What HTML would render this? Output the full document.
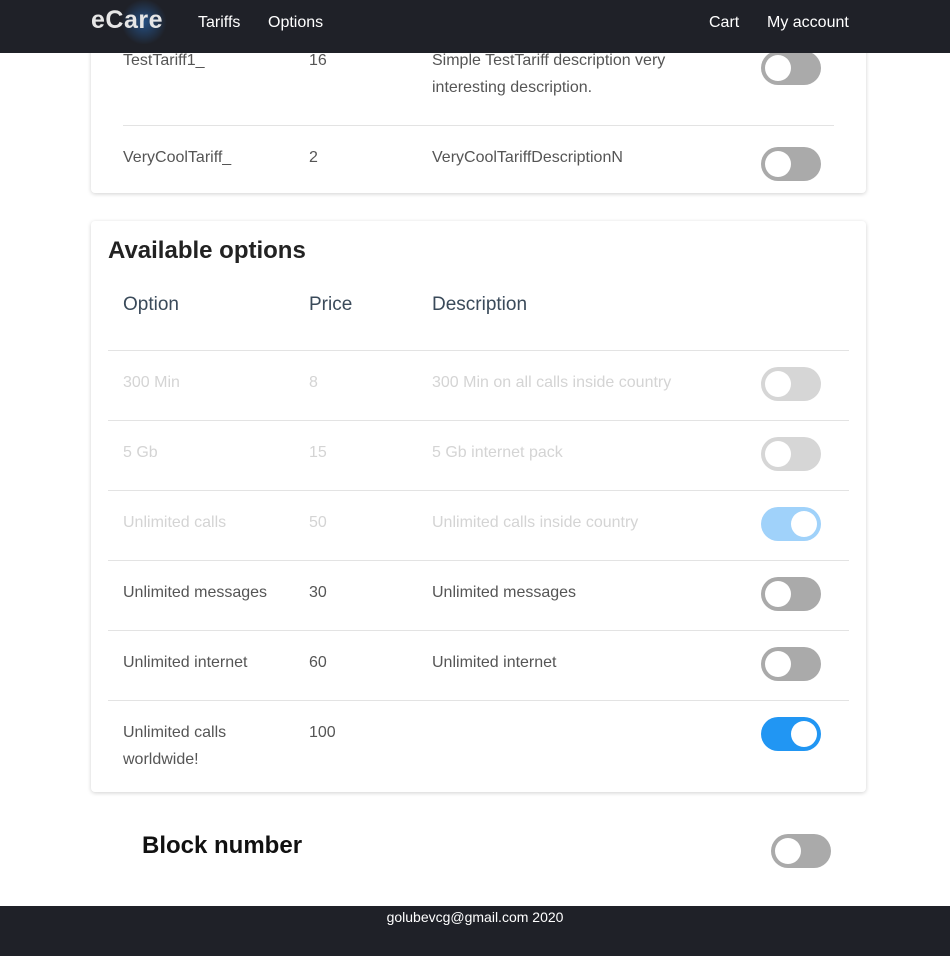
<!DOCTYPE html>
<html><head><style>
*{margin:0;padding:0;box-sizing:border-box}
body{width:950px;height:956px;background:#fff;font-family:"Liberation Sans",sans-serif;position:relative;overflow:hidden;color:#555}
.nav{position:absolute;left:0;top:0;width:950px;height:53px;background:#1f2128;z-index:5}
.nav span{position:absolute;color:#fff;font-size:16px;top:14px}
.logo{position:absolute;left:91px;top:6px;font-size:25px;font-weight:bold;color:#e6e6e6;letter-spacing:0.5px}
.glow{position:absolute;left:120px;top:0;width:48px;height:44px;background:radial-gradient(circle,rgba(40,100,170,.7),rgba(40,100,170,0) 70%)}
.card{position:absolute;left:91px;width:775px;background:#fff;border-radius:4px;box-shadow:0 1px 4px rgba(0,0,0,.18)}
.t{position:absolute;font-size:16px;line-height:27px;color:#555}
.light{color:#d4d4d4}
.h{position:absolute;font-size:19px;color:#3a4a5a}
.sep{position:absolute;height:1px;background:#e3e3e3}
.tg{position:absolute;width:60px;height:34px;border-radius:17px;background:#aaa}
.tg::after{content:"";position:absolute;top:4px;left:4px;width:26px;height:26px;border-radius:50%;background:#fff}
.tg.dis{background:#d6d6d6}
.tg.on{background:#2196f3}.tg.on::after{left:30px}
.tg.ond{background:#a0d2fa}.tg.ond::after{left:30px}
.foot{position:absolute;left:0;top:906px;width:950px;height:50px;background:#1f2128;color:#fff;font-size:14px;text-align:center;padding-top:3px}
</style></head><body>
<div class="nav">
<div class="glow"></div>
<div class="logo">eCare</div>
<span style="left:198px">Tariffs</span>
<span style="left:268px">Options</span>
<span style="left:709px">Cart</span>
<span style="left:767px">My account</span>
</div>

<div class="card" style="top:-20px;height:213px"></div>
<div class="t" style="left:123px;top:47px">TestTariff1_</div>
<div class="t" style="left:309px;top:47px">16</div>
<div class="t" style="left:432px;top:47px;width:290px">Simple TestTariff description very interesting description.</div>
<div class="tg" style="left:761px;top:51px"></div>
<div class="sep" style="left:123px;top:125px;width:711px"></div>
<div class="t" style="left:123px;top:144px">VeryCoolTariff_</div>
<div class="t" style="left:309px;top:144px">2</div>
<div class="t" style="left:432px;top:144px">VeryCoolTariffDescriptionN</div>
<div class="tg" style="left:761px;top:147px"></div>

<div class="card" style="top:221px;height:571px"></div>
<div style="position:absolute;left:108px;top:237px;font-size:24px;font-weight:bold;color:#222">Available options</div>
<div class="h" style="left:123px;top:294px">Option</div>
<div class="h" style="left:309px;top:294px">Price</div>
<div class="h" style="left:432px;top:294px">Description</div>

<div class="sep" style="left:108px;top:350px;width:741px"></div>
<div class="t light" style="left:123px;top:369px">300 Min</div>
<div class="t light" style="left:309px;top:369px">8</div>
<div class="t light" style="left:432px;top:369px">300 Min on all calls inside country</div>
<div class="tg dis" style="left:761px;top:367px"></div>

<div class="sep" style="left:108px;top:420px;width:741px"></div>
<div class="t light" style="left:123px;top:439px">5 Gb</div>
<div class="t light" style="left:309px;top:439px">15</div>
<div class="t light" style="left:432px;top:439px">5 Gb internet pack</div>
<div class="tg dis" style="left:761px;top:437px"></div>

<div class="sep" style="left:108px;top:490px;width:741px"></div>
<div class="t light" style="left:123px;top:509px">Unlimited calls</div>
<div class="t light" style="left:309px;top:509px">50</div>
<div class="t light" style="left:432px;top:509px">Unlimited calls inside country</div>
<div class="tg ond" style="left:761px;top:507px"></div>

<div class="sep" style="left:108px;top:560px;width:741px"></div>
<div class="t" style="left:123px;top:579px">Unlimited messages</div>
<div class="t" style="left:309px;top:579px">30</div>
<div class="t" style="left:432px;top:579px">Unlimited messages</div>
<div class="tg" style="left:761px;top:577px"></div>

<div class="sep" style="left:108px;top:630px;width:741px"></div>
<div class="t" style="left:123px;top:649px">Unlimited internet</div>
<div class="t" style="left:309px;top:649px">60</div>
<div class="t" style="left:432px;top:649px">Unlimited internet</div>
<div class="tg" style="left:761px;top:647px"></div>

<div class="sep" style="left:108px;top:700px;width:741px"></div>
<div class="t" style="left:123px;top:719px;width:150px">Unlimited calls worldwide!</div>
<div class="t" style="left:309px;top:719px">100</div>
<div class="tg on" style="left:761px;top:717px"></div>

<div style="position:absolute;left:142px;top:832px;font-size:24px;font-weight:bold;color:#111">Block number</div>
<div class="tg" style="left:771px;top:834px"></div>

<div class="foot">golubevcg@gmail.com 2020</div>
</body></html>
